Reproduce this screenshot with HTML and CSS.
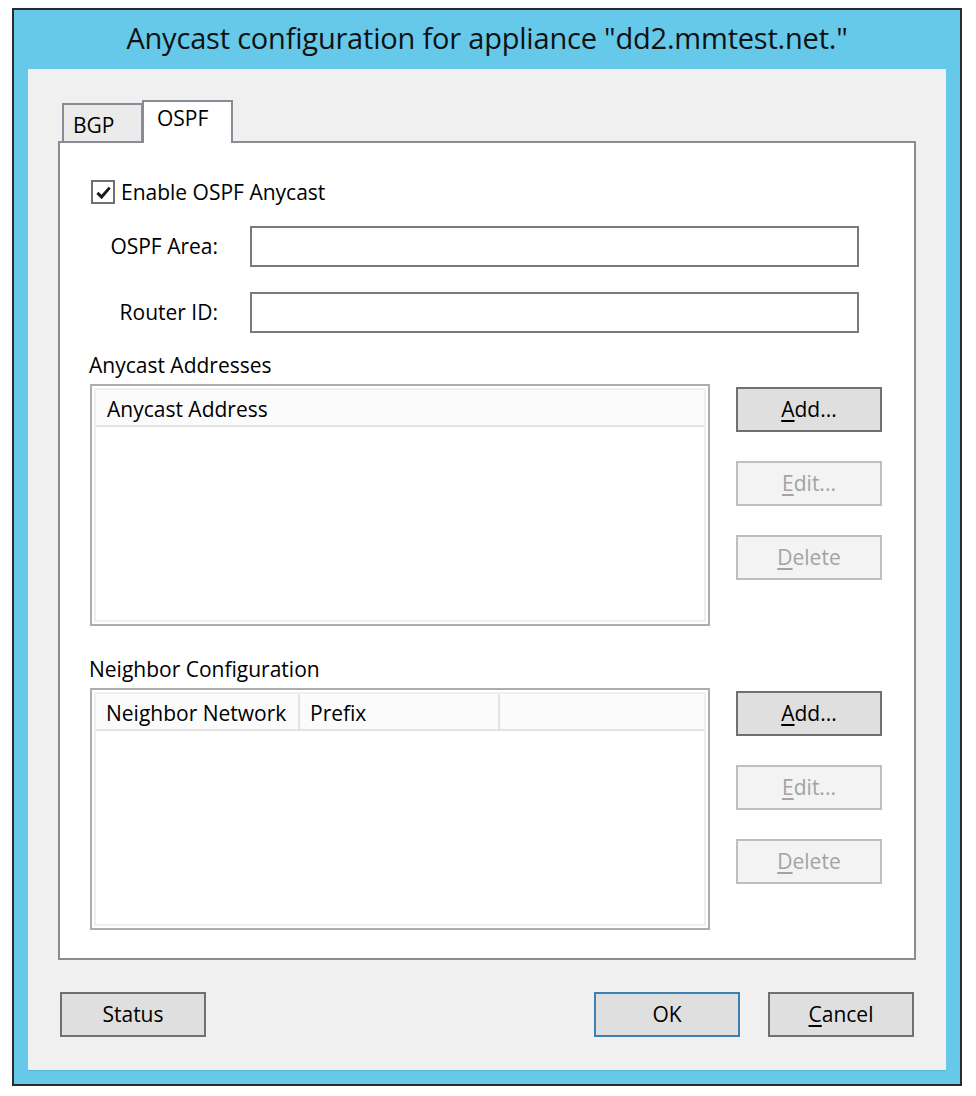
FILE: index.html
```html
<!DOCTYPE html>
<html>
<head>
<meta charset="utf-8">
<link rel="stylesheet" href="styles.css">
</head>
<body>
<div class="window">
  <div class="titlebar">Anycast configuration for appliance "dd2.mmtest.net."</div>
  <div class="client">
    <div class="tabs">
      <div class="tab">BGP</div>
      <div class="tab active">OSPF</div>
    </div>
    <div class="panel">
      <label class="check-row">
        <span class="checkbox">
          <svg viewBox="0 0 16 16" width="17" height="17"><path d="M2.3 8.4 L6.2 12.2 L13.8 3.4" fill="none" stroke="#1a1a1a" stroke-width="2.8"/></svg>
        </span>
        <span>Enable OSPF Anycast</span>
      </label>
      <div class="form">
        <span class="form-label">OSPF Area:</span>
        <div class="input"></div>
        <span class="form-label">Router ID:</span>
        <div class="input"></div>
      </div>

      <div class="section-label first">Anycast Addresses</div>
      <div class="section">
        <div class="list">
          <div class="list-inner">
            <div class="list-header">
              <div class="col col-full">Anycast Address</div>
            </div>
          </div>
        </div>
        <div class="btn-col">
          <div class="btn"><u>A</u>dd...</div>
          <div class="btn disabled"><u>E</u>dit...</div>
          <div class="btn disabled"><u>D</u>elete</div>
        </div>
      </div>

      <div class="section-label second">Neighbor Configuration</div>
      <div class="section">
        <div class="list">
          <div class="list-inner">
            <div class="list-header">
              <div class="col col-net">Neighbor Network</div>
              <div class="col col-prefix">Prefix</div>
              <div class="col col-rest"></div>
            </div>
          </div>
        </div>
        <div class="btn-col">
          <div class="btn"><u>A</u>dd...</div>
          <div class="btn disabled"><u>E</u>dit...</div>
          <div class="btn disabled"><u>D</u>elete</div>
        </div>
      </div>
    </div>
    <div class="footer">
      <div class="btn">Status</div>
      <div class="footer-right">
        <div class="btn default">OK</div>
        <div class="btn"><u>C</u>ancel</div>
      </div>
    </div>
  </div>
</div>
</body>
</html>
```
FILE: styles.css
```css
* { box-sizing: border-box; }
html, body { margin: 0; padding: 0; background: #ffffff; }
body {
  font-family: "Open Sans", "Noto Sans", "DejaVu Sans", sans-serif;
  font-size: 21px;
  color: #000;
}
.window {
  margin: 8px 0 0 12px;
  width: 950px;
  height: 1078px;
  border: 2px solid #2b2b2b;
  background: #66c9e9;
  display: flex;
  flex-direction: column;
}
.titlebar {
  height: 59px;
  display: flex;
  align-items: center;
  justify-content: center;
  font-size: 29px;
  color: #111;
  padding-bottom: 4px;
  letter-spacing: -0.2px;
}
.client {
  flex: 1;
  margin: 0 14px 14px 14px;
  background: #f0f0f0;
  padding: 31px 30px 0 30px;
  box-shadow: 0 1px 0 #59b4d4;
}
.tabs {
  display: flex;
  align-items: flex-end;
  padding-left: 4px;
  height: 41px;
  position: relative;
  z-index: 1;
}
.tab {
  height: 38px;
  width: 81px;
  border: 2px solid #898c95;
  border-bottom: none;
  background: #ebebeb;
  padding: 6px 0 0 9px;
  line-height: 28px;
}
.tab.active {
  height: 43px;
  width: 91px;
  background: #fff;
  margin-left: -1px;
  margin-bottom: -2px;
  padding: 2px 0 0 13px;
}
.panel {
  height: 819px;
  background: #fff;
  border: 2px solid #898c95;
  padding: 37px 0 0 31px;
}
.check-row {
  display: flex;
  align-items: center;
  height: 24px;
  gap: 6px;
}
.checkbox {
  width: 24px;
  height: 24px;
  border: 2px solid #707070;
  background: #fff;
  display: flex;
  align-items: center;
  justify-content: center;
}
.form {
  display: grid;
  grid-template-columns: 127px 609px;
  column-gap: 32px;
  row-gap: 25px;
  margin-top: 22px;
  align-items: center;
}
.form-label {
  text-align: right;
  padding-bottom: 2px;
}
.input {
  height: 41px;
  border: 2px solid #7a7a7a;
  background: #fff;
}
.section-label {
  line-height: 24px;
  margin-left: -2px;
}
.section-label.first { margin-top: 20px; }
.section-label.second { margin-top: 31px; }
.section {
  display: flex;
  gap: 26px;
  margin-top: 7px;
  margin-left: -1px;
}
.list {
  width: 620px;
  height: 242px;
  border: 2px solid #adadad;
  padding: 2px;
  background: #fff;
}
.list-inner {
  height: 100%;
  border: 2px solid #efefef;
}
.list-header {
  display: flex;
  height: 37px;
  background: #fbfbfb;
  border-bottom: 2px solid #e3e3e3;
}
.col {
  padding: 2px 0 0 10px;
  line-height: 34px;
  border-right: 2px solid #e3e3e3;
}
.col-full { flex: 1; border-right: none; padding-left: 11px; }
.col-net { width: 204px; }
.col-prefix { width: 200px; }
.col-rest { flex: 1; border-right: none; }
.btn-col {
  display: flex;
  flex-direction: column;
  gap: 29px;
  padding-top: 3px;
}
.btn {
  width: 146px;
  height: 45px;
  border: 2px solid #707070;
  background: #dfdfdf;
  display: flex;
  align-items: center;
  justify-content: center;
  padding-bottom: 2px;
}
.btn u { text-underline-offset: 3px; }
.btn.disabled {
  border-color: #bfbfbf;
  background: #f3f3f3;
  color: #a3a3a3;
}
.btn.default { border-color: #3c7fb1; }
.footer {
  display: flex;
  justify-content: space-between;
  margin-top: 32px;
  padding: 0 2px;
}
.footer-right {
  display: flex;
  gap: 28px;
}
```
